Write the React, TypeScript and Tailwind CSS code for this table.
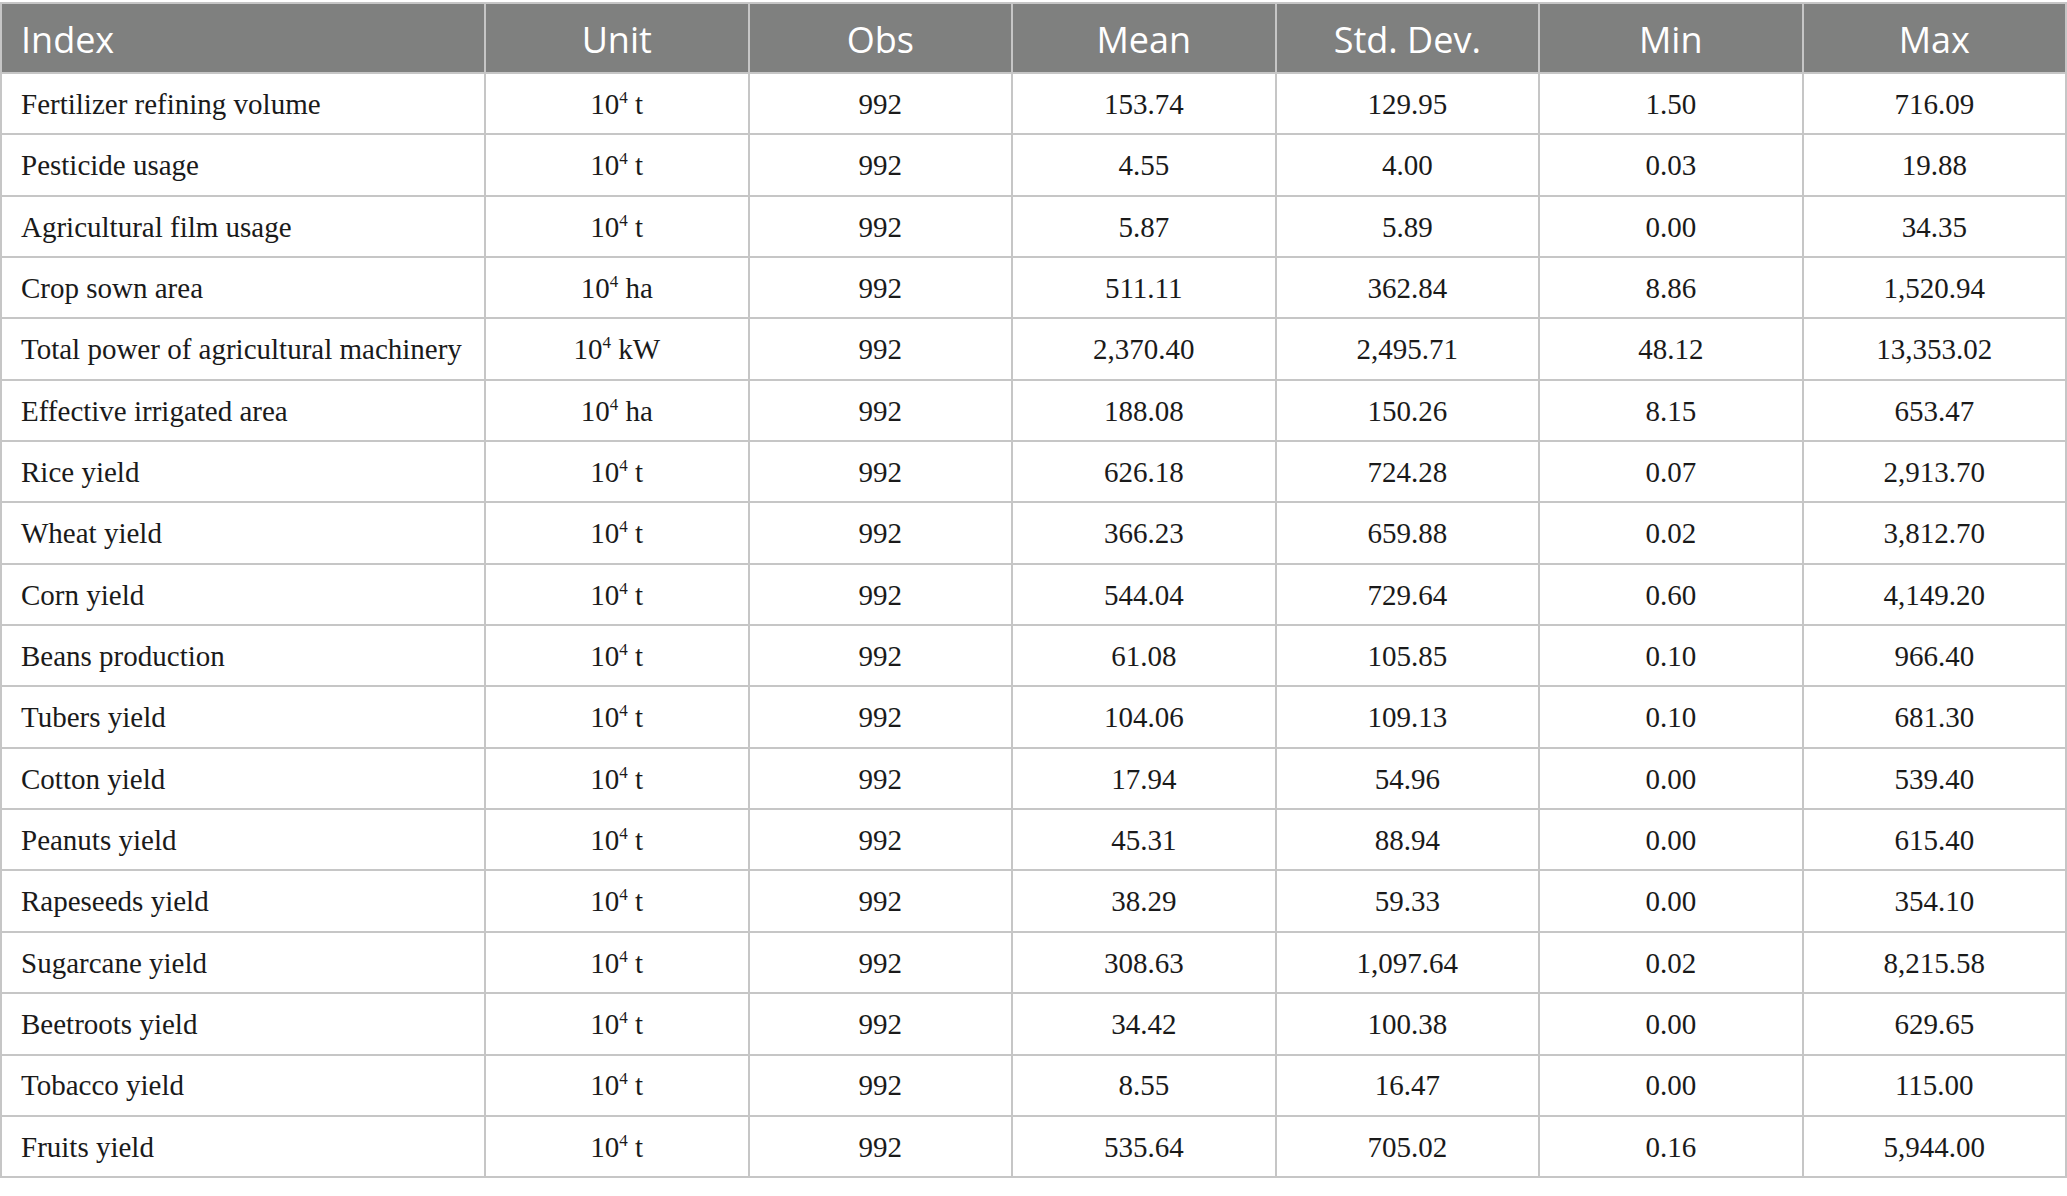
import React from "react";

type Row = { name: string; unit: string; obs: string; mean: string; sd: string; min: string; max: string };

const rows: Row[] = [
  { name: "Fertilizer refining volume", unit: "t", obs: "992", mean: "153.74", sd: "129.95", min: "1.50", max: "716.09" },
  { name: "Pesticide usage", unit: "t", obs: "992", mean: "4.55", sd: "4.00", min: "0.03", max: "19.88" },
  { name: "Agricultural film usage", unit: "t", obs: "992", mean: "5.87", sd: "5.89", min: "0.00", max: "34.35" },
  { name: "Crop sown area", unit: "ha", obs: "992", mean: "511.11", sd: "362.84", min: "8.86", max: "1,520.94" },
  { name: "Total power of agricultural machinery", unit: "kW", obs: "992", mean: "2,370.40", sd: "2,495.71", min: "48.12", max: "13,353.02" },
  { name: "Effective irrigated area", unit: "ha", obs: "992", mean: "188.08", sd: "150.26", min: "8.15", max: "653.47" },
  { name: "Rice yield", unit: "t", obs: "992", mean: "626.18", sd: "724.28", min: "0.07", max: "2,913.70" },
  { name: "Wheat yield", unit: "t", obs: "992", mean: "366.23", sd: "659.88", min: "0.02", max: "3,812.70" },
  { name: "Corn yield", unit: "t", obs: "992", mean: "544.04", sd: "729.64", min: "0.60", max: "4,149.20" },
  { name: "Beans production", unit: "t", obs: "992", mean: "61.08", sd: "105.85", min: "0.10", max: "966.40" },
  { name: "Tubers yield", unit: "t", obs: "992", mean: "104.06", sd: "109.13", min: "0.10", max: "681.30" },
  { name: "Cotton yield", unit: "t", obs: "992", mean: "17.94", sd: "54.96", min: "0.00", max: "539.40" },
  { name: "Peanuts yield", unit: "t", obs: "992", mean: "45.31", sd: "88.94", min: "0.00", max: "615.40" },
  { name: "Rapeseeds yield", unit: "t", obs: "992", mean: "38.29", sd: "59.33", min: "0.00", max: "354.10" },
  { name: "Sugarcane yield", unit: "t", obs: "992", mean: "308.63", sd: "1,097.64", min: "0.02", max: "8,215.58" },
  { name: "Beetroots yield", unit: "t", obs: "992", mean: "34.42", sd: "100.38", min: "0.00", max: "629.65" },
  { name: "Tobacco yield", unit: "t", obs: "992", mean: "8.55", sd: "16.47", min: "0.00", max: "115.00" },
  { name: "Fruits yield", unit: "t", obs: "992", mean: "535.64", sd: "705.02", min: "0.16", max: "5,944.00" },
];

const headers = ["Unit", "Obs", "Mean", "Std. Dev.", "Min", "Max"];

export default function App() {
  return (
    <div className="w-[2067px] h-[1196px] bg-white pt-[2px]">
      <table className="w-[2067px] table-fixed border-collapse">
        <colgroup>
          <col className="w-[484px]" />
          <col />
          <col />
          <col />
          <col />
          <col />
          <col />
        </colgroup>
        <thead>
          <tr className="h-[70px] bg-[#7f807f] text-white text-[36px] font-['Open_Sans',sans-serif]">
            <th className="border-2 border-[#c6c6c6] text-left font-normal pl-[19px] pt-[3px]">Index</th>
            {headers.map((h) => (
              <th key={h} className="border-2 border-[#c6c6c6] text-center font-normal pt-[3px]">
                {h}
              </th>
            ))}
          </tr>
        </thead>
        <tbody className="text-[29px] text-[#1a1a1a] font-['Liberation_Serif',serif]">
          {rows.map((r) => (
            <tr key={r.name} className="h-[61.35px]">
              <td className="border-2 border-[#c6c6c6] pl-[19px] pt-[2px]">{r.name}</td>
              <td className="border-2 border-[#c6c6c6] text-center pt-[2px]">
                10<sup className="text-[17px] relative -top-[11px]">4</sup> {r.unit}
              </td>
              <td className="border-2 border-[#c6c6c6] text-center pt-[2px]">{r.obs}</td>
              <td className="border-2 border-[#c6c6c6] text-center pt-[2px]">{r.mean}</td>
              <td className="border-2 border-[#c6c6c6] text-center pt-[2px]">{r.sd}</td>
              <td className="border-2 border-[#c6c6c6] text-center pt-[2px]">{r.min}</td>
              <td className="border-2 border-[#c6c6c6] text-center pt-[2px]">{r.max}</td>
            </tr>
          ))}
        </tbody>
      </table>
    </div>
  );
}
